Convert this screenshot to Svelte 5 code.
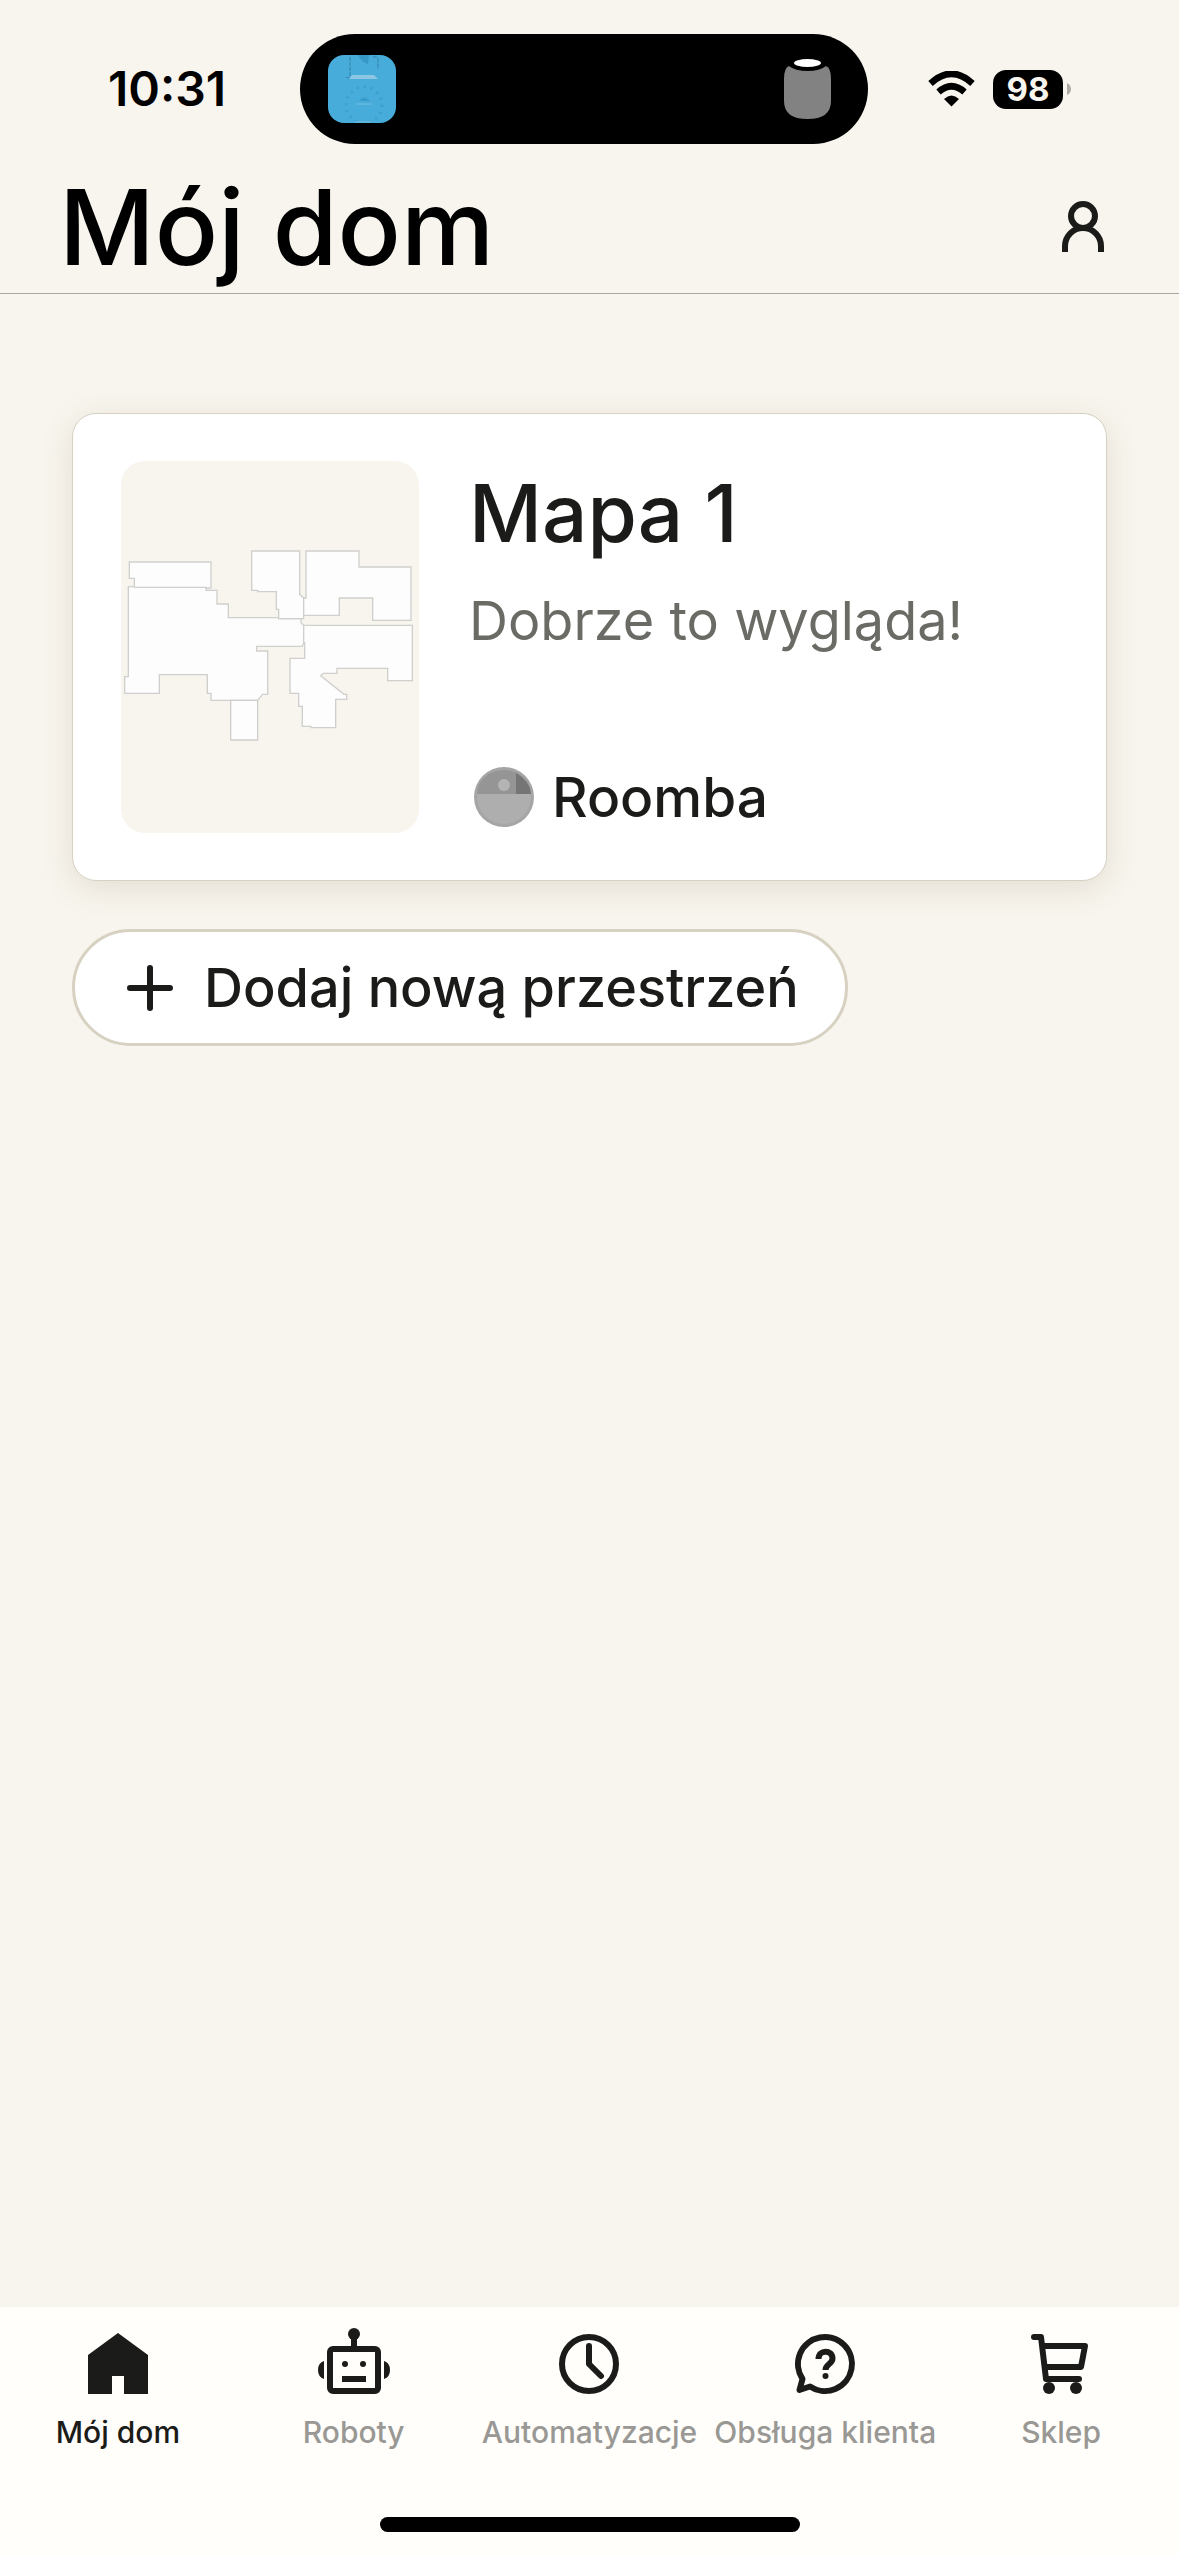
<script lang="ts">
  const tabs = [
    { id: 'home', label: 'Mój dom' },
    { id: 'robots', label: 'Roboty' },
    { id: 'automations', label: 'Automatyzacje' },
    { id: 'support', label: 'Obsługa klienta' },
    { id: 'shop', label: 'Sklep' }
  ];
  let active = $state('home');
</script>

<div class="screen">
  <div class="status">
    <time class="clock">10:31</time>
    <div class="island">
      <svg class="cover" viewBox="0 0 68 68" aria-hidden="true">
        <rect width="68" height="68" rx="16" fill="#47acd9" />
        <path d="M30 0h11l-1 9q-7-2-10-9Z" fill="#3598c6" />
        <path d="M22 2v19q0 3-4 1M45 2q5-1 5 3v9" fill="none" stroke="#3a8fbb" stroke-width="1.500" stroke-dasharray="4 1" />
        <path d="M24 20h22l4 4H21z" fill="#8cc6e2" />
        <circle cx="36" cy="50" r="18" fill="none" stroke="#3f9fcb" stroke-width="3" stroke-dasharray="2 5" />
        <path d="M31 46q5-7 11 0z" fill="#389bc8" />
        <path d="M28 49h16M27 67h16" stroke="#69b8dc" stroke-width="1.500" />
      </svg>
      <svg class="speaker" viewBox="0 0 47 60" aria-hidden="true">
        <path d="M5 7Q0 9 0 20V42Q0 60 23.500 60T47 42V20Q47 9 42 7Q36 12 23.500 12T5 7Z" fill="#828282" />
        <ellipse cx="23.500" cy="4" rx="13.500" ry="4" fill="#fff" />
      </svg>
    </div>
    <div class="signals">
      <svg class="wifi" viewBox="0 0 47 36" aria-hidden="true">
        <path d="M2.500 12.500Q23.500-7 44.500 12.500" fill="none" stroke="#000" stroke-width="6.500" />
        <path d="M10.500 21Q23.500 9.500 36.500 21" fill="none" stroke="#000" stroke-width="6.500" />
        <path d="M16 28Q23.500 21 31 28L23.500 35.500Z" />
      </svg>
      <span class="battery">98</span>
      <svg class="nub" viewBox="0 0 4 12" aria-hidden="true"><path d="M0 0Q4 2 4 6T0 12Z" fill="#adaba6" /></svg>
    </div>
  </div>

  <header>
    <h1>Mój dom</h1>
    <button class="profile" aria-label="Profil">
      <svg viewBox="0 0 42 52" aria-hidden="true">
        <g fill="none" stroke="#1b1b19" stroke-width="6">
          <circle cx="21" cy="15" r="12" />
          <path d="M3 51V45a18 18 0 0 1 36 0V51" />
        </g>
      </svg>
    </button>
  </header>

  <main>
    <article class="card">
      <svg class="map" viewBox="183 183 894 1116" aria-label="Mapa 1" role="img">
        <g fill="#fdfdfd" stroke="#cfcfcd" stroke-width="4">
          <path d="M208 486H453V564H438V571H471V612H505V653H656V656H723V668L731 676V728L727 739H590V753H623V883H608L593 901H453V880H442V824H298V880H194V830H205V560H223V535H208Z" />
          <path d="M223 562H440" />
          <path d="M512 901H593V1020H512Z" />
          <path d="M575 453H719V583L731 594V656H656V628H649V575H593V571H575Z" />
          <path d="M738 453H897V501H1053V661H938V594H838V646H731V594H738Z" />
          <path d="M731 676H1057V842H983V805H831V820H790L782 827L852 883H860V898H827V983H753V979H727V919H716V880H690V775H734V728H731Z" />
        </g>
      </svg>
      <div class="info">
        <h2>Mapa 1</h2>
        <p>Dobrze to wygląda!</p>
        <div class="robot">
          <svg viewBox="0 0 60 60" aria-hidden="true">
            <circle cx="30" cy="30" r="30" fill="#a5a5a5" />
            <circle cx="30" cy="30" r="27" fill="#aeaeae" />
            <path d="M3 27a27 24 0 0 1 54 0Z" fill="#959595" />
            <path d="M42 27V6q14 8 15 21Z" fill="#757575" />
            <circle cx="30" cy="18" r="6" fill="#b4b4b4" />
          </svg>
          <span>Roomba</span>
        </div>
      </div>
    </article>
    <button class="add">
      <svg viewBox="0 0 48 48" aria-hidden="true"><path d="M24 4V44M4 24H44" stroke="#1b1b19" stroke-width="6" stroke-linecap="round" /></svg>
      Dodaj nową przestrzeń
    </button>
  </main>

  <nav>
    <div class="tabs">
      {#each tabs as tab}
        <button class="tab" class:active={active === tab.id} onclick={() => (active = tab.id)}>
          <svg viewBox="0 0 72 72" aria-hidden="true">
            {#if tab.id === 'home'}
              <path d="M36 5L66 27V66H42V48H30V66H6V27Z" fill="#1b1b19" />
            {:else if tab.id === 'robots'}
              <g fill="#1b1b19">
                <circle cx="36" cy="6" r="6" /><path d="M33 8h6v12h-6z" />
                <rect x="12" y="21" width="48" height="42" rx="3" fill="none" stroke="#1b1b19" stroke-width="6" />
                <circle cx="27" cy="36" r="3" /><circle cx="45" cy="36" r="3" />
                <path d="M24 48h24v6H24zM6 33v18q-6-2-6-9t6-9ZM66 33v18q6-2 6-9t-6-9Z" />
              </g>
            {:else if tab.id === 'automations'}
              <g fill="none" stroke="#1b1b19" stroke-width="6" stroke-linecap="round" stroke-linejoin="round">
                <circle cx="36" cy="36" r="27" /><path d="M36 18V36L48 48" />
              </g>
            {:else if tab.id === 'support'}
              <g fill="none" stroke="#1b1b19" stroke-width="6" stroke-linejoin="round">
                <path d="M13.500 51A27 27 0 1 1 21 58.500L10.500 62Z" />
                <path d="M29.500 31C29.500 21 43.500 21.500 43.500 30.500C43.500 36 36.500 36 36.500 42" />
                <circle cx="36.500" cy="48" r="3" fill="#1b1b19" stroke="none" />
              </g>
            {:else}
              <g fill="none" stroke="#1b1b19" stroke-width="6" stroke-linecap="round" stroke-linejoin="round">
                <path d="M9 9H16L21 51H54M17.500 18H60L56 39H20" />
              </g>
              <circle cx="24" cy="60" r="6" fill="#1b1b19" /><circle cx="51" cy="60" r="6" fill="#1b1b19" />
            {/if}
          </svg>
          <span>{tab.label}</span>
        </button>
      {/each}
    </div>
    <div class="handle"></div>
  </nav>
</div>

<style>
  :global(body) { background: #f8f5ee; }
  .screen {
    min-height: 100vh;
    display: flex;
    flex-direction: column;
    background: #f8f5ee;
    color: #1b1b19;
    font-family: Inter, "Liberation Sans", sans-serif;
  }
  * { box-sizing: border-box; }
  svg { display: block; flex: none; }
  h1, h2, p { margin: 0; }
  button { border: 0; padding: 0; margin: 0; background: none; color: inherit; font: inherit; cursor: pointer; }
  .status {
    display: grid;
    grid-template-columns: 1fr 568px 1fr;
    align-items: center;
    padding: 34px 0 0;
    margin-right: 11px;
    color: #000;
  }
  .clock { justify-self: center; padding-left: 34px; font-size: 48px; line-height: 56px; font-weight: 600; }
  .island {
    height: 110px;
    border-radius: 55px;
    background: #000;
    display: flex;
    align-items: center;
    justify-content: space-between;
    padding: 0 37px 0 28px;
  }
  .cover { width: 68px; height: 68px; }
  .speaker { width: 47px; height: 60px; }
  .signals { display: flex; align-items: center; padding-left: 60px; }
  .wifi { width: 47px; height: 36px; margin-right: 18px; }
  .battery {
    width: 70px;
    height: 39px;
    border-radius: 13px;
    background: #000;
    color: #f8f5ee;
    font-size: 33px;
    line-height: 39px;
    font-weight: 700;
    text-align: center;
  }
  .nub { width: 4px; height: 12px; margin-left: 4px; }
  header {
    height: 150px;
    border-bottom: 1px solid #aaa9a4;
    display: flex;
    align-items: center;
    justify-content: space-between;
    padding: 16px 75px 0 59px;
  }
  h1 { font-size: 105px; line-height: 132px; font-weight: 500; color: #000; }
  .profile svg { width: 42px; height: 52px; }
  main { flex: 1; padding: 119px 72px 48px; }
  .card {
    display: flex;
    gap: 50px;
    padding: 47px 48px;
    border: 1px solid #d7d1c2;
    border-radius: 24px;
    background: #fff;
    box-shadow: 0 8px 32px rgba(90, 80, 50, 0.13);
  }
  .map { width: 298px; height: 372px; border-radius: 24px; background: #f8f5ee; }
  .info { flex: 1; display: flex; flex-direction: column; }
  h2 { font-size: 80px; line-height: 104px; font-weight: 500; }
  p { font-size: 54px; line-height: 72px; margin-top: 20px; color: #6b6b66; }
  .robot { display: flex; align-items: center; gap: 18px; margin-top: auto; padding-left: 5px; font-size: 55px; line-height: 72px; font-weight: 500; }
  .robot svg { width: 60px; height: 60px; }
  .add {
    display: flex;
    align-items: center;
    gap: 30px;
    height: 117px;
    margin-top: 48px;
    padding: 0 46px 0 51px;
    border: 3px solid #d7d1c2;
    border-radius: 59px;
    background: #fff;
    font-size: 54px;
    font-weight: 500;
    white-space: nowrap;
  }
  .add svg { width: 48px; height: 48px; }
  nav { background: #fffefb; padding: 21px 0 24px; }
  .tabs { display: grid; grid-template-columns: repeat(5, 1fr); }
  .tab { min-width: 0; display: flex; flex-direction: column; align-items: center; gap: 12px; color: #999894; font-size: 30px; line-height: 40px; font-weight: 500; white-space: nowrap; }
  .tab svg { width: 72px; height: 72px; }
  .tab.active { color: #1b1b19; }
  .handle { width: 420px; height: 15px; margin: 65px auto 0; border-radius: 8px; background: #000; }
</style>
